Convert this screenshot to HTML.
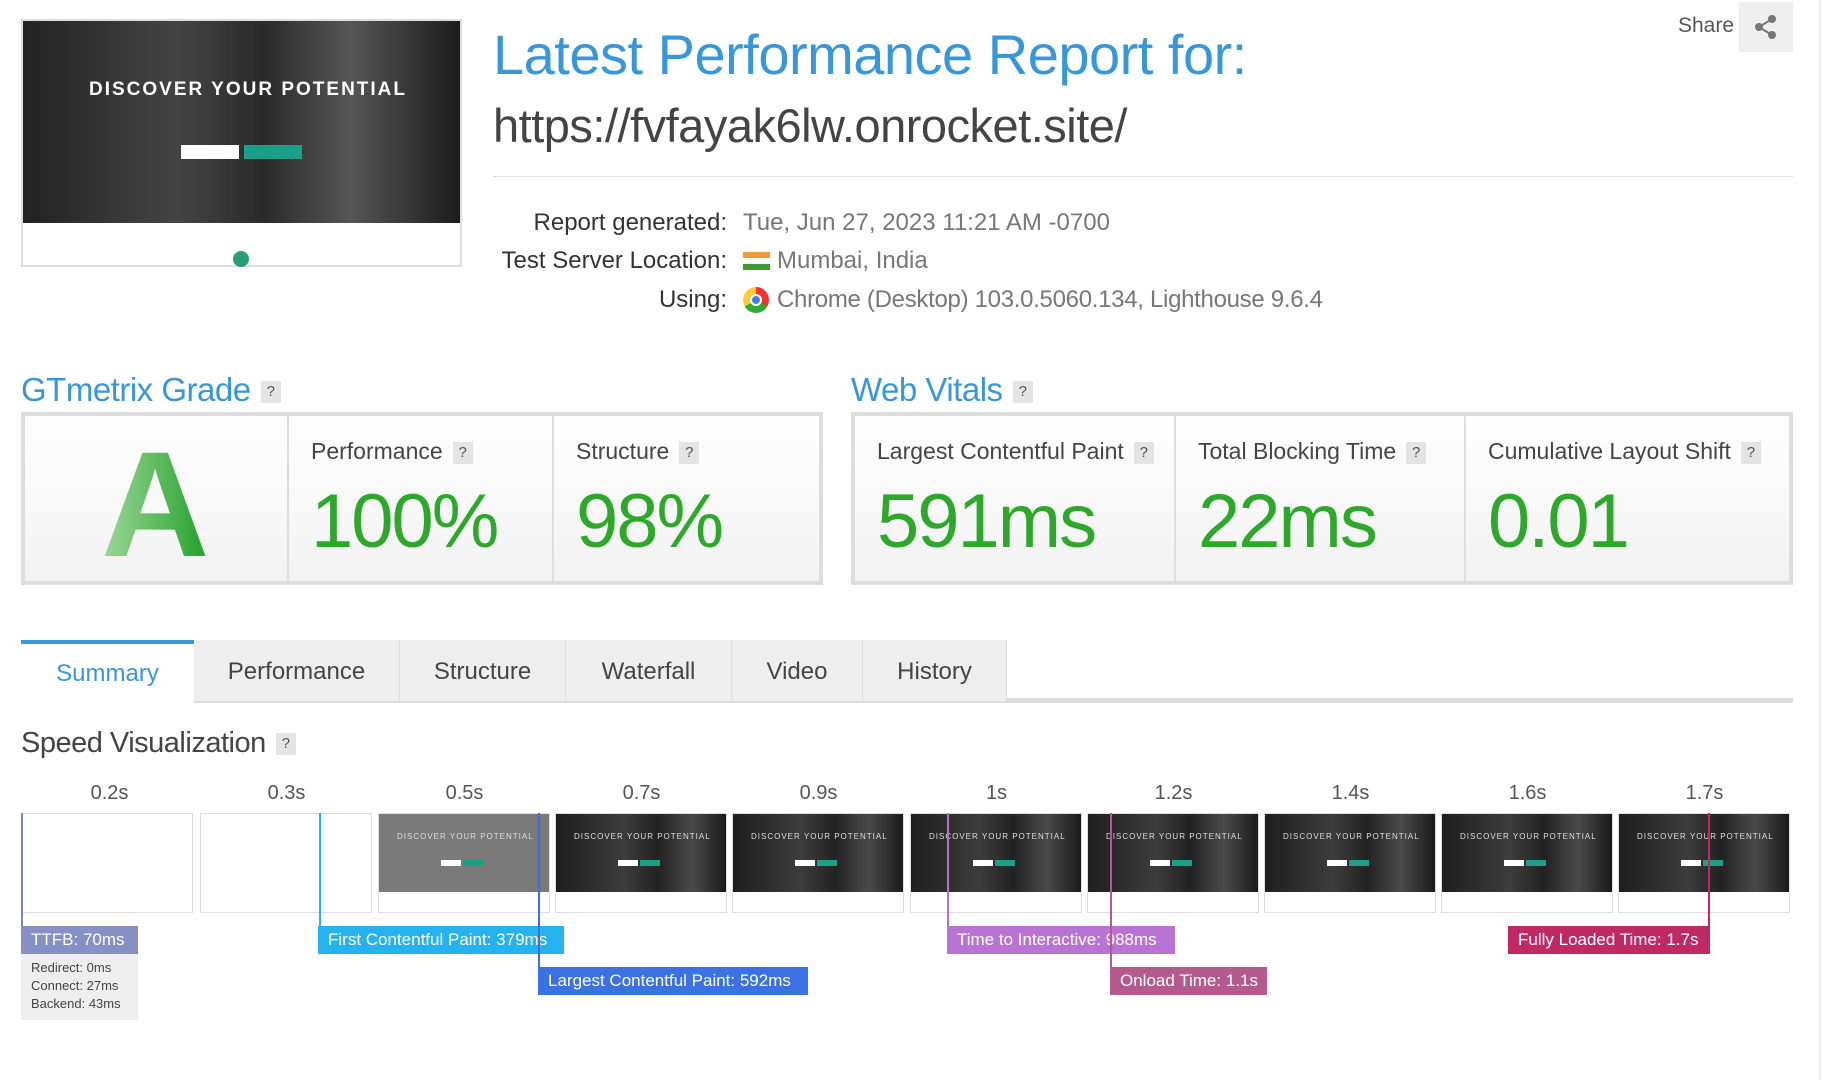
<!DOCTYPE html>
<html><head><meta charset="utf-8"><style>
*{box-sizing:border-box;margin:0;padding:0}
body{width:1822px;height:1080px;background:#fff;font-family:"Liberation Sans",sans-serif;position:relative;overflow:hidden;color:#444}
.a{position:absolute}
.thumb{left:21px;top:19px;width:441px;height:248px;border:2px solid #ddd;background:#fff}
.thumb .img{position:absolute;left:0;top:0;width:437px;height:202px;background:linear-gradient(90deg,#222 0%,#444 35%,#2a2a2a 55%,#555 75%,#1c1c1c 100%)}
.q{display:inline-block;width:20px;height:22px;background:#e4e4e4;color:#555;font-size:15px;text-align:center;line-height:22px;vertical-align:middle;margin-left:10px}
.lbl{font-size:24px;color:#333;text-align:right;width:727px;left:0}
.val{font-size:24px;color:#777;left:777px}
.box{border:4px solid #ddd;background:#ddd;display:flex;gap:2px}
.cell{background:linear-gradient(#fff,#f2f2f2);position:relative;height:100%}
.cl{position:absolute;left:22px;top:22px;font-size:23px;color:#444}
.big{position:absolute;left:22px;top:62px;font-size:76px;color:#2ea82b;letter-spacing:-2px}
.tab{position:absolute;top:640px;height:61px;background:#eee;font-size:24px;color:#444;text-align:center;line-height:63px;border-right:1px solid #ddd}
.tl{position:absolute;top:782px;font-size:20px;color:#555;width:177px;text-align:center}
.fr{position:absolute;top:813px;width:172px;height:100px;border:1px solid #ddd;background:#fff}
.fr .s{position:absolute;left:0;top:0;width:170px;height:78px;background:linear-gradient(90deg,#1e1e1e,#3c3c3c 40%,#222 60%,#4a4a4a 80%,#1a1a1a)}
.fr .s:after{content:"DISCOVER YOUR POTENTIAL";position:absolute;left:18px;top:18px;font-size:8px;color:#ddd;letter-spacing:1px}
.fr .s:before{content:"";position:absolute;left:62px;top:46px;width:20px;height:6px;background:#fff;box-shadow:22px 0 #1aa088}
.mk{position:absolute;color:#fff;font-size:17px;line-height:28px;padding-left:10px;height:28px}
.vl{position:absolute;width:2px}
</style></head><body>
<div class="a thumb"><div class="img"></div>
<div class="a" style="left:66px;top:58px;font-size:19px;color:#fff;font-weight:bold;letter-spacing:2px">DISCOVER YOUR POTENTIAL</div>
<div class="a" style="left:158px;top:124px;width:58px;height:14px;background:#fff"></div>
<div class="a" style="left:221px;top:124px;width:58px;height:14px;background:#1aa088"></div>
<div class="a" style="left:210px;top:230px;width:16px;height:16px;border-radius:50%;background:#2a9d7a"></div>
</div>
<div class="a" style="left:493px;top:22px;font-size:56px;color:#3797d8;letter-spacing:-0.5px">Latest Performance Report for:</div>
<div class="a" style="left:493px;top:98px;font-size:47px;color:#444;letter-spacing:-0.5px">https://fvfayak6lw.onrocket.site/</div>
<div class="a" style="left:1678px;top:14px;font-size:21px;color:#555">Share</div>
<div class="a" style="left:1739px;top:2px;width:54px;height:50px;background:#eee;color:#777;font-size:26px;text-align:center;line-height:50px">
<svg width="26" height="26" viewBox="0 0 26 26" style="margin-top:12px"><circle cx="19" cy="5" r="4" fill="#777"/><circle cx="6" cy="13" r="4" fill="#777"/><circle cx="19" cy="21" r="4" fill="#777"/><path d="M19 5L6 13L19 21" stroke="#777" stroke-width="2" fill="none"/></svg></div>
<div class="a" style="left:493px;top:176px;width:1300px;height:1px;background:#ddd"></div>
<div class="a lbl" style="top:209px">Report generated:</div>
<div class="a val" style="top:209px;left:743px">Tue, Jun 27, 2023 11:21 AM -0700</div>
<div class="a lbl" style="top:247px">Test Server Location:</div>
<div class="a" style="left:743px;top:252px;width:27px;height:18px;background:linear-gradient(#f39a3a 33%,#fff 33%,#fff 66%,#3a9a3a 66%)"></div>
<div class="a val" style="top:247px">Mumbai, India</div>
<div class="a lbl" style="top:286px">Using:</div>
<div class="a" style="left:743px;top:287px;width:26px;height:26px;border-radius:50%;background:conic-gradient(#e33 0 120deg,#3a3 120deg 240deg,#fc3 240deg)"><div style="margin:7px;width:12px;height:12px;border-radius:50%;background:#3d7fe0;border:2px solid #fff"></div></div>
<div class="a val" style="top:286px;letter-spacing:-0.3px">Chrome (Desktop) 103.0.5060.134, Lighthouse 9.6.4</div>

<div class="a" style="left:21px;top:371px;font-size:33px;color:#3797d8;letter-spacing:-0.5px">GTmetrix Grade<span class="q">?</span></div>
<div class="a" style="left:851px;top:371px;font-size:33px;color:#3797d8;letter-spacing:-0.5px">Web Vitals<span class="q">?</span></div>
<div class="a box" style="left:21px;top:412px;width:802px;height:173px">
<div class="cell" style="width:262px"><div style="position:absolute;left:76px;top:2px;font-size:150px;font-weight:bold;background:linear-gradient(90deg,#9fd89a,#22a02a);-webkit-background-clip:text;color:transparent">A</div></div>
<div class="cell" style="width:263px"><div class="cl">Performance<span class="q">?</span></div><div class="big">100%</div></div>
<div class="cell" style="flex:1"><div class="cl">Structure<span class="q">?</span></div><div class="big">98%</div></div>
</div>
<div class="a box" style="left:851px;top:412px;width:942px;height:173px">
<div class="cell" style="width:319px"><div class="cl">Largest Contentful Paint<span class="q">?</span></div><div class="big">591ms</div></div>
<div class="cell" style="width:288px"><div class="cl">Total Blocking Time<span class="q">?</span></div><div class="big">22ms</div></div>
<div class="cell" style="flex:1"><div class="cl">Cumulative Layout Shift<span class="q">?</span></div><div class="big">0.01</div></div>
</div>

<div class="a" style="left:21px;top:698px;width:1772px;height:5px;background:#ddd"></div>
<div class="tab" style="left:21px;width:173px;background:#fff;color:#3797d8;border-top:4px solid #3797d8;line-height:59px;height:63px;border-right:none">Summary</div>
<div class="tab" style="left:194px;width:206px">Performance</div>
<div class="tab" style="left:400px;width:166px">Structure</div>
<div class="tab" style="left:566px;width:166px">Waterfall</div>
<div class="tab" style="left:732px;width:131px">Video</div>
<div class="tab" style="left:863px;width:144px">History</div>

<div class="a" style="left:21px;top:727px;font-size:29px;color:#444;letter-spacing:-0.5px">Speed Visualization<span class="q">?</span></div>

<div class="tl" style="left:21px">0.2s</div><div class="tl" style="left:198px">0.3s</div><div class="tl" style="left:376px">0.5s</div><div class="tl" style="left:553px">0.7s</div><div class="tl" style="left:730px">0.9s</div><div class="tl" style="left:908px">1s</div><div class="tl" style="left:1085px">1.2s</div><div class="tl" style="left:1262px">1.4s</div><div class="tl" style="left:1439px">1.6s</div><div class="tl" style="left:1616px">1.7s</div>
<div class="fr" style="left:21px"></div><div class="fr" style="left:200px"></div>
<div class="fr" style="left:378px"><div class="s" style="background:#7a7a7a"></div></div>
<div class="fr" style="left:555px"><div class="s"></div></div><div class="fr" style="left:732px"><div class="s"></div></div><div class="fr" style="left:910px"><div class="s"></div></div><div class="fr" style="left:1087px"><div class="s"></div></div><div class="fr" style="left:1264px"><div class="s"></div></div><div class="fr" style="left:1441px"><div class="s"></div></div><div class="fr" style="left:1618px"><div class="s"></div></div>

<div class="vl" style="left:21px;top:813px;height:113px;background:#7b86c0"></div>
<div class="mk" style="left:21px;top:926px;width:117px;background:#8790c4">TTFB: 70ms</div>
<div class="a" style="left:21px;top:954px;width:117px;height:66px;background:#eee;font-size:13px;color:#444;line-height:18px;padding:5px 0 0 10px">Redirect: 0ms<br>Connect: 27ms<br>Backend: 43ms</div>
<div class="vl" style="left:319px;top:813px;height:113px;background:#2ab0ec"></div>
<div class="mk" style="left:318px;top:926px;width:246px;background:#25b2ef">First Contentful Paint: 379ms</div>
<div class="vl" style="left:538px;top:813px;height:154px;background:#3a6fe0"></div>
<div class="mk" style="left:538px;top:967px;width:270px;background:#3a72e4">Largest Contentful Paint: 592ms</div>
<div class="vl" style="left:947px;top:813px;height:113px;background:#b86fd0"></div>
<div class="mk" style="left:947px;top:926px;width:228px;background:#b973d4">Time to Interactive: 988ms</div>
<div class="vl" style="left:1110px;top:813px;height:154px;background:#b35a8e"></div>
<div class="mk" style="left:1110px;top:967px;width:157px;background:#b45a8e">Onload Time: 1.1s</div>
<div class="vl" style="left:1708px;top:813px;height:113px;background:#c02a64"></div>
<div class="mk" style="left:1508px;top:926px;width:202px;background:#c02a64">Fully Loaded Time: 1.7s</div>
<div class="a" style="left:1819px;top:0;width:2px;height:1080px;background:#eee"></div>
</body></html>
